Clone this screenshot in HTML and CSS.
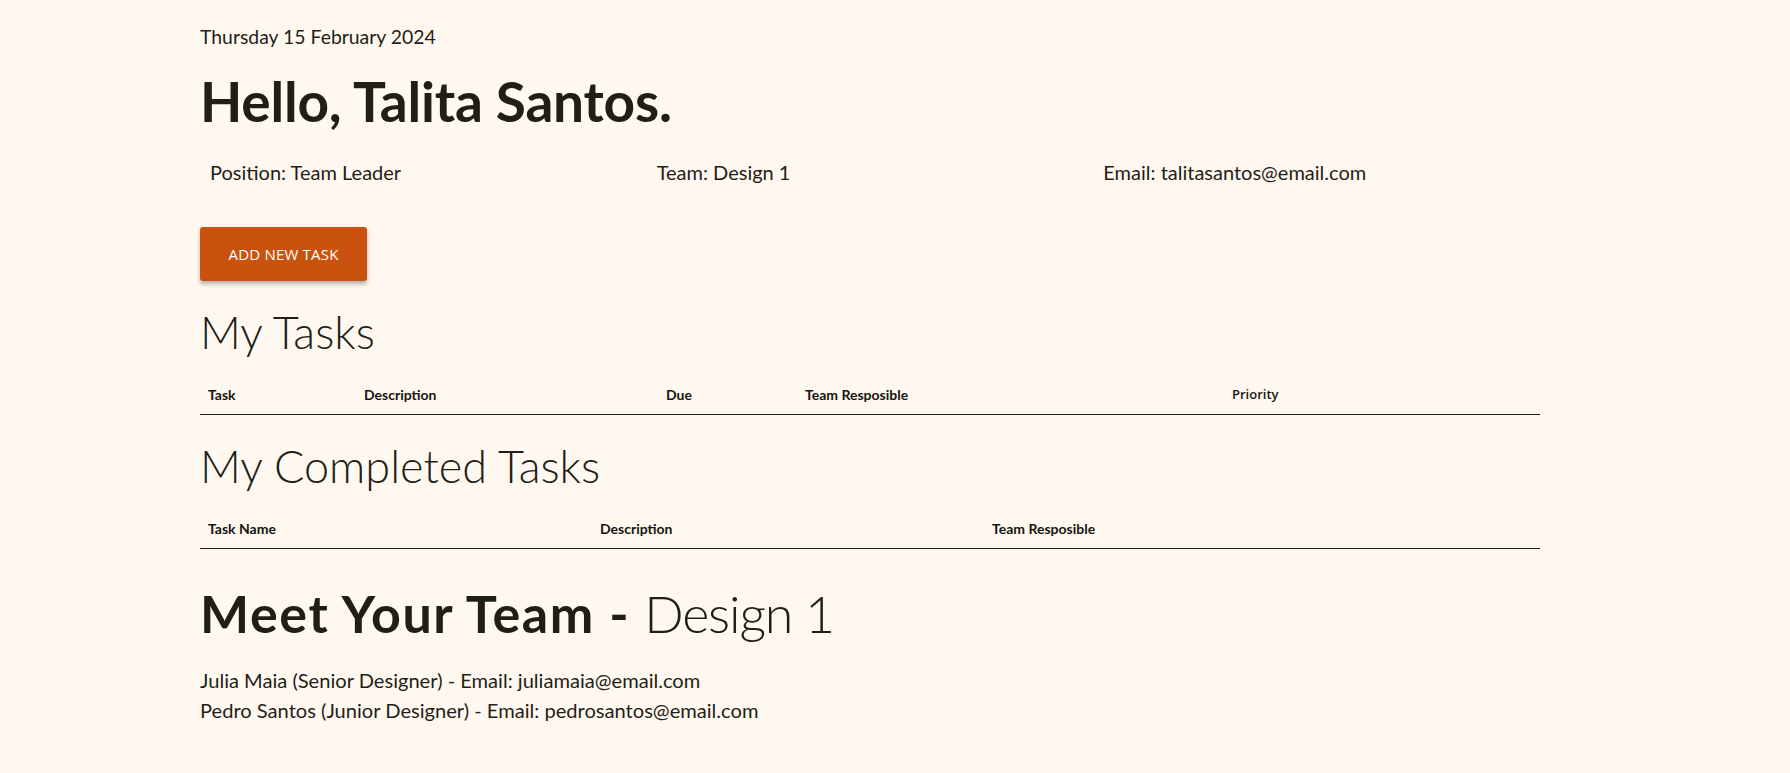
FILE: index.html
```html
<!DOCTYPE html>
<html lang="en">
<head>
<meta charset="utf-8">
<title>Dashboard</title>
<link rel="stylesheet" href="styles.css">
</head>
<body>
<main class="page">
  <p class="date">Thursday 15 February 2024</p>
  <h1 class="greeting">Hello, Talita Santos.</h1>
  <div class="info">
    <span class="info-item">Position: Team Leader</span>
    <span class="info-item">Team: Design 1</span>
    <span class="info-item">Email: talitasantos@email.com</span>
  </div>
  <button class="btn-add" type="button">ADD NEW TASK</button>

  <h2 class="section-title section-title--tasks">My Tasks</h2>
  <table class="task-table task-table--mine">
    <colgroup>
      <col class="c-task"><col class="c-desc"><col class="c-due"><col class="c-team"><col>
    </colgroup>
    <thead>
      <tr>
        <th>Task</th>
        <th>Description</th>
        <th>Due</th>
        <th>Team Resposible</th>
        <th class="th-alt">Priority</th>
      </tr>
    </thead>
  </table>

  <h2 class="section-title section-title--done">My Completed Tasks</h2>
  <table class="task-table task-table--done">
    <colgroup>
      <col class="c-name"><col class="c-desc2"><col>
    </colgroup>
    <thead>
      <tr>
        <th>Task Name</th>
        <th>Description</th>
        <th>Team Resposible</th>
      </tr>
    </thead>
  </table>

  <h2 class="team-title"><strong class="team-title-strong">Meet Your Team -</strong> <span class="team-title-light">Design 1</span></h2>
  <ul class="team-list">
    <li>Julia Maia (Senior Designer) - Email: juliamaia@email.com</li>
    <li>Pedro Santos (Junior Designer) - Email: pedrosantos@email.com</li>
  </ul>
</main>
</body>
</html>
```

FILE: styles.css
```css
html, body {
  margin: 0;
  padding: 0;
  background: #fff8f1;
}

body {
  font-family: "Lato", "Noto Sans", sans-serif;
  color: #1f1e17;
}

.page {
  margin-left: 200px;
  width: 1340px;
  padding-top: 25px;
}

.date {
  margin: 0;
  font-size: 19.4px;
  line-height: 24px;
  font-weight: 400;
}

.greeting {
  margin: 22px 0 0;
  font-size: 55px;
  line-height: 60px;
  font-weight: 700;
  letter-spacing: -0.2px;
}

.info {
  display: grid;
  grid-template-columns: repeat(3, 1fr);
  margin-top: 29px;
  font-size: 20px;
  line-height: 24px;
}

.info-item {
  padding-left: 10px;
}

.btn-add {
  display: block;
  margin-top: 43px;
  width: 167px;
  height: 54px;
  border: none;
  border-radius: 3px;
  background: #c9520f;
  color: #ffffff;
  font-family: "Open Sans", "Noto Sans", sans-serif;
  font-size: 15px;
  letter-spacing: 0.2px;
  box-shadow: 0 3px 4px rgba(0, 0, 0, 0.3);
  cursor: pointer;
}

.section-title {
  margin: 0;
  font-size: 45px;
  line-height: 50px;
  font-weight: 300;
}

.section-title--tasks {
  margin-top: 26px;
}

.section-title--done {
  margin-top: 26px;
}

.task-table {
  width: 100%;
  border-collapse: collapse;
  table-layout: fixed;
  margin-top: 21px;
}

.task-table th {
  text-align: left;
  font-size: 14px;
  line-height: 17px;
  font-weight: 700;
  color: #151510;
  padding: 8px 8px 11px;
  border-bottom: 1px solid #1f1e17;
}

.task-table .th-alt {
  font-family: "Open Sans", "Noto Sans", sans-serif;
  font-weight: 600;
  font-size: 13px;
}

.c-task { width: 156px; }
.c-desc { width: 302px; }
.c-due { width: 139px; }
.c-team { width: 427px; }

.c-name { width: 392px; }
.c-desc2 { width: 392px; }

.team-title {
  margin: 36px 0 0;
  font-size: 52px;
  line-height: 56px;
  font-weight: 300;
}

.team-title-strong {
  font-weight: 700;
  letter-spacing: 1.6px;
}

.team-title-light {
  letter-spacing: -1.2px;
}

.team-list {
  list-style: none;
  margin: 24px 0 0;
  padding: 0;
  font-size: 20.1px;
  line-height: 30px;
}
```
